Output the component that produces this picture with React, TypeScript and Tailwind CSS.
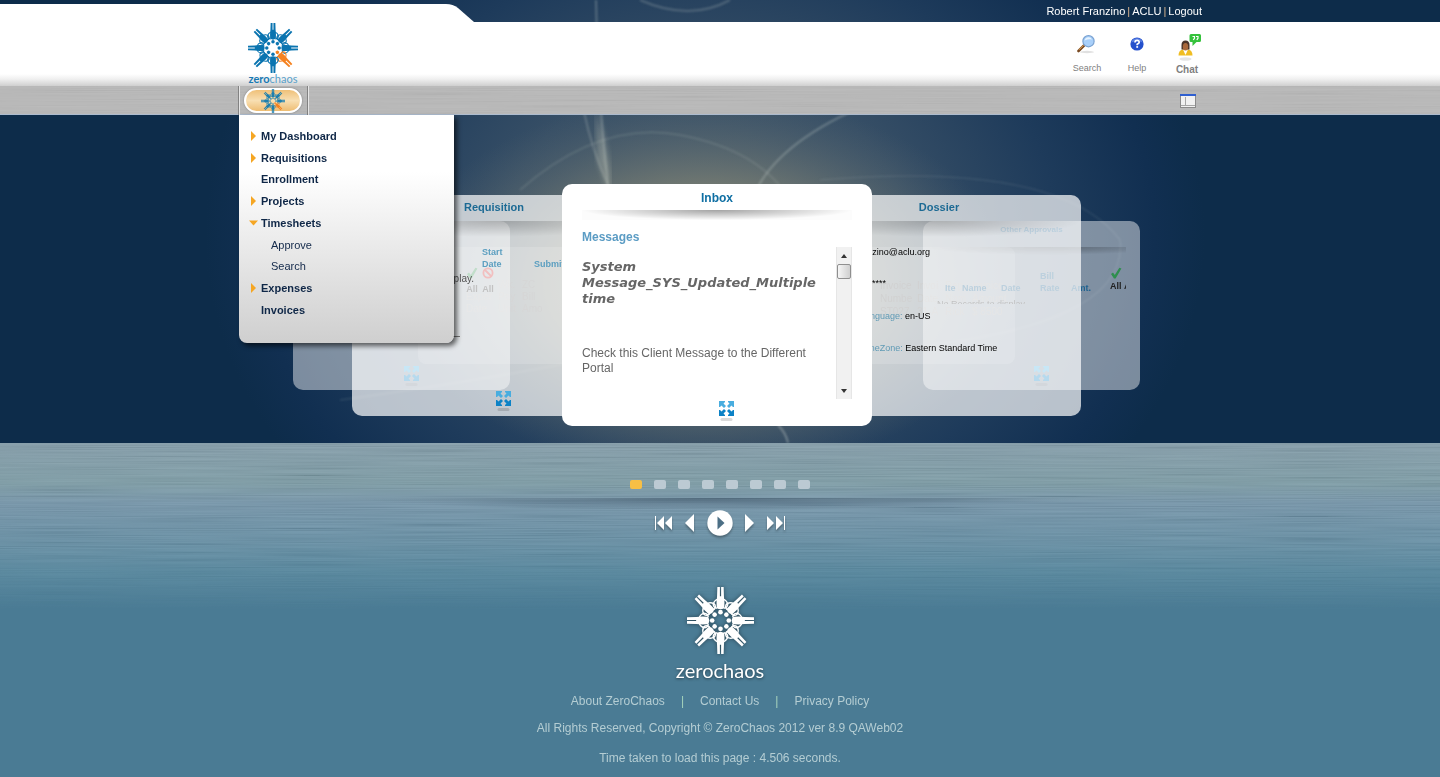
import React from "react";

const SPOKES = [0, 45, 90, 135, 180, 225, 270, 315];

function Star({ className, color, accent }: { className: string; color: string; accent?: string }) {
  return (
    <svg viewBox="-33 -33 66 66" className={className} aria-hidden="true">
      {SPOKES.map((angle) => {
        const c = accent && angle === 135 ? accent : color;
        return (
          <g key={angle} transform={`rotate(${angle})`} fill={c}>
            <circle cx="0" cy="-8.2" r="2.3" />
            <path d="M-3.8 -12.5 Q0 -9.500 3.8 -12.5 L3.9 -18 L3.4 -24 L3.1 -33 H0.6 V-24 H-0.6 V-33 H-3.1 L-3.4 -24 L-3.9 -18 Z" />
            <path
              d="M-3 -12 Q-7 -12.500 -7.200 -16 Q-6 -20 -2.500 -21 M3 -12 Q7 -12.500 7.200 -16 Q6 -20 2.500 -21"
              fill="none"
              stroke={c}
              strokeWidth="1.4"
            />
          </g>
        );
      })}
    </svg>
  );
}

function Brushed({ id, className }: { id: string; className: string }) {
  return (
    <svg className={`pointer-events-none absolute inset-0 h-full w-full ${className}`} aria-hidden="true">
      <filter id={id} x="0" y="0" width="100%" height="100%">
        <feTurbulence type="fractalNoise" baseFrequency="0.008 0.9" numOctaves="1" seed="4" />
        <feColorMatrix values="1.6 0 0 0 -0.3  1.6 0 0 0 -0.3  1.6 0 0 0 -0.3  0 0 0 0 1" />
      </filter>
      <rect width="100%" height="100%" filter={`url(#${id})`} />
    </svg>
  );
}

function HeroArt() {
  return (
    <svg
      className="pointer-events-none absolute inset-x-0 top-0 h-[443px] w-full"
      viewBox="0 0 1440 443"
      preserveAspectRatio="xMidYMid slice"
      aria-hidden="true"
    >
      <defs>
        <radialGradient id="halo">
          <stop offset="0" stopColor="#4a5f70" />
          <stop offset="0.4" stopColor="#374f66" />
          <stop offset="0.7" stopColor="#1e3b5b" />
          <stop offset="0.9" stopColor="#112f51" />
          <stop offset="1" stopColor="#0d2c4a" />
        </radialGradient>
        <radialGradient id="glow">
          <stop offset="0" stopColor="#a29c7c" stopOpacity="0.95" />
          <stop offset="0.5" stopColor="#8a8974" stopOpacity="0.68" />
          <stop offset="1" stopColor="#5c6a70" stopOpacity="0" />
        </radialGradient>
        <filter id="soft">
          <feGaussianBlur stdDeviation="1.2" />
        </filter>
        <filter id="softer">
          <feGaussianBlur stdDeviation="3" />
        </filter>
      </defs>
      <rect width="1440" height="443" fill="#0d2c4a" />
      <ellipse cx="705" cy="235" rx="500" ry="400" fill="url(#halo)" />
      <ellipse cx="705" cy="285" rx="310" ry="190" fill="url(#glow)" />
      <g fill="none" stroke="#c8cfcc" filter="url(#soft)">
        <path d="M596 0 Q598 100 608 185" strokeWidth="2" opacity="0.3" />
        <path d="M608 185 Q592 150 584 112" strokeWidth="2" opacity="0.25" />
        <path d="M850 112 Q770 150 752 200" strokeWidth="2" opacity="0.3" />
        <path d="M520 190 Q600 120 680 135 T790 200" strokeWidth="2" opacity="0.15" />
        <path d="M820 180 Q1060 160 1120 240 Q1130 330 880 350" strokeWidth="1.5" opacity="0.12" />
        <path d="M340 400 Q560 370 720 330" strokeWidth="1.5" opacity="0.15" />
        <path d="M778 425 Q786 433 788 443" strokeWidth="2" opacity="0.4" />
        <path d="M640 0 Q690 22 730 0" strokeWidth="2" opacity="0.25" />
      </g>
      <path d="M596 110 Q612 160 610 195 L598 160 Z" fill="#dcdcc8" opacity="0.35" filter="url(#softer)" />
    </svg>
  );
}

function ExpandButton({ className, label }: { className: string; label: string }) {
  return (
    <button type="button" aria-label={label} className={`block ${className}`}>
      <svg viewBox="0 0 15 20" className="h-5 w-[15px]" aria-hidden="true">
        <g fill="#49addf">
          <path d="M0 0H6V1L4.500 2.500 7 5 5 7 2.500 4.500 1 6H0Z" />
          <path d="M15 0V6H14L12.500 4.500 10 7 8 5 10.500 2.500 9 1V0Z" />
        </g>
        <g fill="#0c82c6">
          <path d="M0 15V9H1L2.500 10.500 5 8 7 10 4.500 12.500 6 14V15Z" />
          <path d="M15 15H9V14L10.500 12.500 8 10 10 8 12.500 10.500 14 9H15Z" />
        </g>
        <rect x="1.500" y="17" width="12" height="3" rx="1.500" fill="#000" opacity="0.14" />
      </svg>
    </button>
  );
}

function Tick({ className }: { className: string }) {
  return (
    <svg viewBox="0 0 12 12" className={className} aria-hidden="true">
      <path d="M1 7 3 5.6 4.8 8 9.4 0.8 11.4 1.6 5.6 11.4H4Z" fill="#2f8f4e" />
    </svg>
  );
}

function Ban({ className }: { className: string }) {
  return (
    <svg viewBox="0 0 12 12" className={className} aria-hidden="true">
      <circle cx="6" cy="6" r="4.6" fill="none" stroke="#d22b2b" strokeWidth="1.8" />
      <path d="M3 3l6 6" stroke="#d22b2b" strokeWidth="1.8" />
    </svg>
  );
}

type MenuItem = { label: string; kind: "closed" | "open" | "plain" | "sub" };

const MENU: MenuItem[] = [
  { label: "My Dashboard", kind: "closed" },
  { label: "Requisitions", kind: "closed" },
  { label: "Enrollment", kind: "plain" },
  { label: "Projects", kind: "closed" },
  { label: "Timesheets", kind: "open" },
  { label: "Approve", kind: "sub" },
  { label: "Search", kind: "sub" },
  { label: "Expenses", kind: "closed" },
  { label: "Invoices", kind: "plain" },
];

function Menu() {
  return (
    <ul className="absolute left-px top-full z-30 flex h-[228px] w-[215px] flex-col justify-between rounded-b-lg bg-linear-to-b from-white from-25% to-[#cfcfcf] pt-[11px] pb-[23px] shadow-[3px_3px_5px_rgba(0,0,0,0.6)]">
      {MENU.map((item) => (
        <li key={item.label} className="h-5">
          <a
            href="#"
            className={
              item.kind === "sub"
                ? "flex h-5 items-center pl-8 text-[11px] text-[#13294a]"
                : "flex h-5 items-center pl-2.5 text-[11px] font-bold text-[#0f2747]"
            }
          >
            {item.kind !== "sub" && (
              <svg viewBox="0 0 12 10" className="h-2.5 w-3 shrink-0" aria-hidden="true">
                {item.kind === "closed" && <path d="M2 0 7 5 2 10Z" fill="#f5a623" />}
                {item.kind === "open" && <path d="M0 2.5H9L4.5 7.5Z" fill="#f5a623" />}
              </svg>
            )}
            {item.label}
          </a>
        </li>
      ))}
    </ul>
  );
}

function Header() {
  return (
    <header className="relative z-20">
      <div className="relative h-[22px]">
        <svg viewBox="0 0 34 18" className="absolute bottom-0 left-[440px] h-[18px] w-[34px]" aria-hidden="true">
          <path d="M0 0H6Q13 0 18 4L34 18H0Z" fill="#fff" />
        </svg>
        <div className="absolute bottom-0 left-0 h-[18px] w-[441px] bg-white" />
        <div className="mx-auto flex h-full max-w-[964px] items-center justify-end gap-0.5 text-[11px] text-white">
          <a href="#">Robert Franzino</a>
          <span className="text-[#d9b48f]">|</span>
          <a href="#">ACLU</a>
          <span className="text-[#d9b48f]">|</span>
          <a href="#">Logout</a>
        </div>
      </div>

      <div className="h-16 bg-[linear-gradient(to_bottom,#fff_52px,#f0f0f0_57px,#cfcfcf_64px)]">
        <div className="mx-auto flex max-w-[964px] justify-between">
          <a href="#" aria-label="zerochaos" className="ml-[9px] flex w-[52px] flex-col items-center">
            <Star className="mt-px size-[50px]" color="#0a74b0" accent="#f58220" />
            <span className="font-['Lato'] text-[11px] leading-[11px] text-[#5a9fc9]">
              <b className="text-[#1779b3]">zero</b>chaos
            </span>
          </a>
          <div className="flex gap-5 pt-3 text-[9px] text-[#808080]">
            <button type="button" className="flex w-[30px] flex-col items-center">
              <svg viewBox="0 0 20 20" className="size-5" aria-hidden="true">
                <ellipse cx="10" cy="18" rx="7" ry="1.2" fill="#000" opacity="0.12" />
                <path d="M1.500 17 7 11.500" stroke="#7a4a22" strokeWidth="2.600" strokeLinecap="round" />
                <path d="M2 15.800 6.500 11.300" stroke="#e0a55a" strokeWidth="1" />
                <circle cx="11.500" cy="7.200" r="5.600" fill="#a9d0fa" stroke="#7ba3d2" strokeWidth="1.200" />
                <path d="M7.500 6.500a4 4 0 0 1 7.500-1q-3-1-7.500 1Z" fill="#e6f3ff" />
              </svg>
              <span className="mt-1.5 leading-4">Search</span>
            </button>
            <button type="button" className="flex w-[30px] flex-col items-center">
              <svg viewBox="0 0 20 20" className="size-5" aria-hidden="true">
                <circle cx="10" cy="10" r="6.600" fill="#2450cc" />
                <path d="M4.300 8.500a6 6 0 0 1 11.400 0Q10 6 4.300 8.500Z" fill="#7b9cf0" opacity="0.6" />
                <path d="M8 8.400Q8 6.300 10.100 6.300T12.200 8.200Q12.200 9.300 10.200 10.300V11.200" fill="none" stroke="#fff" strokeWidth="1.700" />
                <rect x="9.300" y="12.100" width="1.800" height="1.700" fill="#fff" />
              </svg>
              <span className="mt-1.5 leading-4">Help</span>
            </button>
            <button type="button" className="flex w-[30px] flex-col items-center font-bold">
              <svg viewBox="0 0 30 28" className="h-7 w-[30px]" aria-hidden="true">
                <ellipse cx="13.500" cy="25" rx="6" ry="1.800" fill="#000" opacity="0.1" />
                <path d="M6.500 21.500Q6.500 16.500 10.500 15.500H16.500Q20.500 16.500 20.500 21.500Z" fill="#f0bd22" />
                <path d="M11 15.500 13.500 21 16 15.500Z" fill="#fff" />
                <path d="M9.500 15.500V11Q9.500 6.500 13.500 6.500T17.500 11V15.500Z" fill="#4a3428" />
                <ellipse cx="13.500" cy="12.800" rx="2.700" ry="3.800" fill="#a9683a" />
                <path d="M19 0H27.500Q29 0 29 1.500V6.500Q29 8 27.500 8H24.500L20.500 12V8H19Q17.500 8 17.500 6.500V1.500Q17.500 0 19 0Z" fill="#35c23c" />
                <path d="M20.500 2.500H22.500V4.200L21.300 6M24 2.500H26V4.200L24.800 6" fill="none" stroke="#fff" strokeWidth="1.200" />
              </svg>
              <span className="text-[10px] leading-4">Chat</span>
            </button>
          </div>
        </div>
      </div>

      <nav className="relative h-[29px] bg-[#b5b5b5] shadow-[inset_0_-1px_0_#a9b8cc]">
        <Brushed id="steel" className="opacity-20 mix-blend-soft-light" />
        <div className="relative mx-auto flex h-full max-w-[964px] items-center justify-between">
          <div className="flex h-[29px] w-[70px] items-center justify-center border-x border-[#828282] shadow-[inset_1px_0_0_#e6e6e6,1px_0_0_#e6e6e6]">
            <button
              type="button"
              aria-label="Menu"
              className="flex h-[25px] w-[58px] items-center justify-center rounded-full border-2 border-white bg-linear-to-b from-[#efc078] via-[#f8dfb2] to-[#eebd72] shadow-[0_0_2px_#777]"
            >
              <Star className="size-6" color="#1c7fae" accent="#f58220" />
            </button>
          </div>
          <button type="button" aria-label="Layout" className="mr-[5px]">
            <svg viewBox="0 0 18 16" className="h-4 w-[18px]" aria-hidden="true">
              <rect x="1.500" y="1.500" width="15" height="13" fill="#f1f1f1" stroke="#8a8a8a" />
              <rect x="1" y="1" width="16" height="2" fill="#2f5fd0" />
              <path d="M6.500 4V12M2 12.500H16" stroke="#a6a6a6" />
            </svg>
          </button>
          <Menu />
        </div>
      </nav>
    </header>
  );
}

function CardTitle({ children }: { children: React.ReactNode }) {
  return (
    <>
      <h2 className="h-[26px] text-center text-[11px] font-bold leading-[25px] text-[#1c6a94]">{children}</h2>
      <div className="h-4 bg-[radial-gradient(50%_100%_at_50%_0%,rgba(0,0,0,0.22),rgba(0,0,0,0))]" />
    </>
  );
}

function BackLeft() {
  return (
    <section className="absolute left-[179px] top-[132px] h-[117px] w-[180px] rounded-lg bg-white/15 text-[10px] leading-3 text-[#777]">
      <div className="grid grid-cols-[32px_24px_24px] pt-8 pl-12">
        <span />
        <span>Wk.</span>
        <span>ZC</span>
        <span>Exper</span>
        <span>Pay</span>
        <span>Bill</span>
        <span>Date</span>
        <span>Unit</span>
        <span>Amo</span>
      </div>
    </section>
  );
}

function BackRight() {
  return (
    <section className="absolute left-[596px] top-[132px] h-[117px] w-[180px] rounded-lg bg-white/15 text-[10px] leading-[13px] text-[#666]">
      <div className="grid grid-cols-[37px_28px_27px_40px] pt-8 pl-[45px]">
        <span>Invoice</span>
        <span>Invoi</span>
        <span>Rep.</span>
        <span>Invoice</span>
        <span>Numbe</span>
        <span>Date</span>
        <span>Nam</span>
        <span>Amount</span>
        <span>ST027</span>
        <span>31-A</span>
        <span>Rick</span>
        <span>$ 8500</span>
      </div>
    </section>
  );
}

function ExpenseCard() {
  return (
    <section className="absolute left-[54px] top-[106px] h-[169px] w-[217px] rounded-[10px] bg-white/45">
      <div className="flex justify-end gap-1 pt-[46px] pr-4 text-[9px] font-bold text-[#333]">
        <div className="flex w-3 flex-col items-center">
          <Tick className="size-3" />
          <span className="pt-0.5 leading-4">All</span>
        </div>
        <div className="flex w-3 flex-col items-center">
          <Ban className="size-3" />
          <span className="pt-0.5 leading-4">All</span>
        </div>
      </div>
      <ExpandButton label="Expand expenses" className="absolute bottom-1 left-[111px]" />
    </section>
  );
}

function ApprovalsCard() {
  return (
    <section className="absolute left-[684px] top-[106px] h-[169px] w-[217px] rounded-[10px] bg-white/45 text-[9px] font-bold text-[#1f628f]">
      <h2 className="h-[26px] text-center text-[8px] leading-[18px]">Other Approvals</h2>
      <div className="mr-3.5 h-2 bg-[radial-gradient(60%_100%_at_60%_0%,rgba(0,0,0,0.3),rgba(0,0,0,0))]" />
      <div className="mr-3.5 flex items-end overflow-hidden pt-3 pl-[22px] leading-3">
        <span className="w-[17px] shrink-0">Ite</span>
        <span className="w-[39px] shrink-0">Name</span>
        <span className="w-[39px] shrink-0">Date</span>
        <span className="w-[31px] shrink-0">Bill Rate</span>
        <span className="w-[39px] shrink-0">Amt.</span>
        <div className="flex shrink-0 flex-col whitespace-nowrap pb-0.5 text-[#222]">
          <Tick className="size-3" />
          <span className="mt-px">All&nbsp;All</span>
        </div>
      </div>
      <p className="ml-3.5 mt-1 h-1.5 w-[92px] overflow-hidden whitespace-nowrap font-normal leading-3 text-[#333]">
        No Records to display
      </p>
      <ExpandButton label="Expand other approvals" className="absolute bottom-1 left-[111px]" />
    </section>
  );
}

function RequisitionCard() {
  return (
    <section className="absolute left-[113px] top-20 h-[221px] w-[284px] rounded-[10px] bg-white/70">
      <CardTitle>Requisition</CardTitle>
      <div className="flex items-end pt-[9px] pl-[130px] text-[9px] font-bold leading-3 text-[#5c9fc0]">
        <span className="w-[52px] pr-6">Start Date</span>
        <span>Submitted</span>
      </div>
      <p className="w-[122px] pt-px text-right text-[10px] leading-4 text-[#555]">No records to display.</p>
      <hr className="mt-[49px] w-[108px] border-t border-[#777]" />
      <ExpandButton label="Expand requisition" className="absolute bottom-[5px] left-36" />
    </section>
  );
}

function DossierCard() {
  return (
    <section className="absolute left-[558px] top-20 h-[221px] w-[284px] rounded-[10px] bg-white/70">
      <CardTitle>Dossier</CardTitle>
      <div className="pt-2.5 text-[9px] leading-[11px] text-black">
        <p className="w-[133px] text-right">rfranzino@aclu.org</p>
        <p className="w-[89px] pt-5 text-right">********</p>
        <p className="pt-[22px] pl-[63px]">
          <span className="text-[#5f9ab5]">Language:</span> en-US
        </p>
        <p className="pt-[21px] pl-[63px]">
          <span className="text-[#5f9ab5]">TimeZone:</span> Eastern Standard Time
        </p>
      </div>
    </section>
  );
}

function InboxCard() {
  return (
    <section className="absolute left-[323px] top-[69px] h-[242px] w-[310px] rounded-[10px] bg-white px-5">
      <h2 className="h-[26px] text-center text-[12px] font-bold leading-7 text-[#0f6fa3]">Inbox</h2>
      <div className="h-2.5 bg-[radial-gradient(50%_100%_at_50%_0%,rgba(0,0,0,0.36),rgba(0,0,0,0.01))]" />
      <h3 className="pt-[9px] text-[12px] font-bold leading-4 text-[#5b9cc4]">Messages</h3>
      <div className="mt-0.5 flex h-[152px]">
        <div className="min-w-0 flex-1 overflow-hidden pt-3 text-[#666]">
          <p className="font-['DejaVu_Sans','Verdana',sans-serif] text-[13px] font-bold italic leading-4">
            System Message_SYS_Updated_Multiple time
          </p>
          <p className="w-[240px] pt-[39px] text-[12px] leading-[15px]">Check this Client Message to the Different Portal</p>
        </div>
        <div className="flex w-4 flex-col border-x border-[#e6e6e6] bg-[#f1f1f1]">
          <button type="button" aria-label="Scroll up" className="flex h-[17px] items-center justify-center">
            <svg viewBox="0 0 6 4" className="h-1 w-1.5" aria-hidden="true">
              <path d="M3 0 6 4H0Z" fill="#333" />
            </svg>
          </button>
          <div className="h-[15px] rounded-xs border border-[#8f8f8f] bg-linear-to-r from-[#f6f6f6] to-[#cfcfcf]" />
          <button type="button" aria-label="Scroll down" className="mt-auto flex h-[17px] items-center justify-center">
            <svg viewBox="0 0 6 4" className="h-1 w-1.5" aria-hidden="true">
              <path d="M0 0H6L3 4Z" fill="#333" />
            </svg>
          </button>
        </div>
      </div>
      <ExpandButton label="Expand inbox" className="mt-0.5 ml-[137px]" />
    </section>
  );
}

function Pager() {
  return (
    <div className="flex flex-col items-center">
      <div className="flex gap-3 pb-[9px]">
        {[1, 2, 3, 4, 5, 6, 7, 8].map((n) => (
          <button
            key={n}
            type="button"
            aria-label={`Panel ${n}`}
            className={n === 1 ? "h-[9px] w-3 rounded-xs bg-[#f7bf45]" : "h-[9px] w-3 rounded-xs bg-[#bccad3]"}
          />
        ))}
      </div>
      <div className="h-3 w-full max-w-[720px] bg-[radial-gradient(50%_100%_at_50%_0%,rgba(40,60,80,0.45),rgba(40,60,80,0))]" />
      <div className="flex h-[25px] items-center gap-3 drop-shadow-[0_2px_1px_rgba(0,0,0,0.3)]">
        <button type="button" aria-label="First">
          <svg viewBox="0 0 18 14" className="h-3.5 w-[18px]" fill="#fff" aria-hidden="true">
            <path d="M0 0H1V14H0ZM9 0V14L2 7ZM17 0V14L10 7Z" />
          </svg>
        </button>
        <button type="button" aria-label="Previous">
          <svg viewBox="0 0 10 18" className="h-[18px] w-2.5" fill="#fff" aria-hidden="true">
            <path d="M9 0V18L0 9Z" />
          </svg>
        </button>
        <button type="button" aria-label="Play">
          <svg viewBox="0 0 26 26" className="size-[26px]" aria-hidden="true">
            <circle cx="13" cy="13" r="12.700" fill="#fff" />
            <path d="M10.500 6.500V19.500L17.500 13Z" fill="#4c6f85" />
          </svg>
        </button>
        <button type="button" aria-label="Next">
          <svg viewBox="0 0 10 18" className="h-[18px] w-2.5" fill="#fff" aria-hidden="true">
            <path d="M0 0V18L9 9Z" />
          </svg>
        </button>
        <button type="button" aria-label="Last">
          <svg viewBox="0 0 18 14" className="h-3.5 w-[18px]" fill="#fff" aria-hidden="true">
            <path d="M18 0H17V14H18ZM9 0V14L16 7ZM0 0V14L7 7Z" />
          </svg>
        </button>
      </div>
    </div>
  );
}

function Footer() {
  return (
    <footer className="flex flex-col items-center text-[12px] text-[#b4cdd3]">
      <Star className="mt-[52px] size-[67px] drop-shadow-[0_0_2px_rgba(0,0,0,0.45)]" color="#fff" />
      <p className="mt-1 font-['Lato'] text-[20px] leading-6 text-white [text-shadow:0_1px_3px_rgba(0,0,0,0.5)]">zerochaos</p>
      <p className="mt-[11px] flex gap-4 leading-4">
        <a href="#">About ZeroChaos</a>
        <span className="text-[#a5d3bd]">|</span>
        <a href="#">Contact Us</a>
        <span className="text-[#a5d3bd]">|</span>
        <a href="#">Privacy Policy</a>
      </p>
      <p className="mt-[11px] leading-4">All Rights Reserved, Copyright © ZeroChaos 2012 ver 8.9 QAWeb02</p>
      <p className="mt-3.5 leading-4">Time taken to load this page : 4.506 seconds.</p>
    </footer>
  );
}

export default function App() {
  return (
    <div className="relative flex min-h-screen flex-col overflow-x-hidden bg-[#4a7b94] font-['Liberation_Sans',Arial,sans-serif]">
      <HeroArt />
      <Header />
      <main className="relative">
        <div className="relative mx-auto h-[328px] max-w-[962px]">
          <BackLeft />
          <BackRight />
          <ExpenseCard />
          <ApprovalsCard />
          <RequisitionCard />
          <DossierCard />
          <InboxCard />
        </div>
      </main>
      <div className="relative flex-1 bg-[linear-gradient(to_bottom,#829ca9_0px,#7b9ba5_40px,#7394a9_60px,#658ea4_95px,#55869d_130px,#4a7b94_165px)]">
        <div className="pointer-events-none absolute inset-x-0 top-0 h-[170px] opacity-10 [mask-image:linear-gradient(to_bottom,black_60%,transparent)]">
          <Brushed id="water" className="" />
        </div>
        <div className="relative pt-[37px]">
          <Pager />
          <Footer />
        </div>
      </div>
    </div>
  );
}
